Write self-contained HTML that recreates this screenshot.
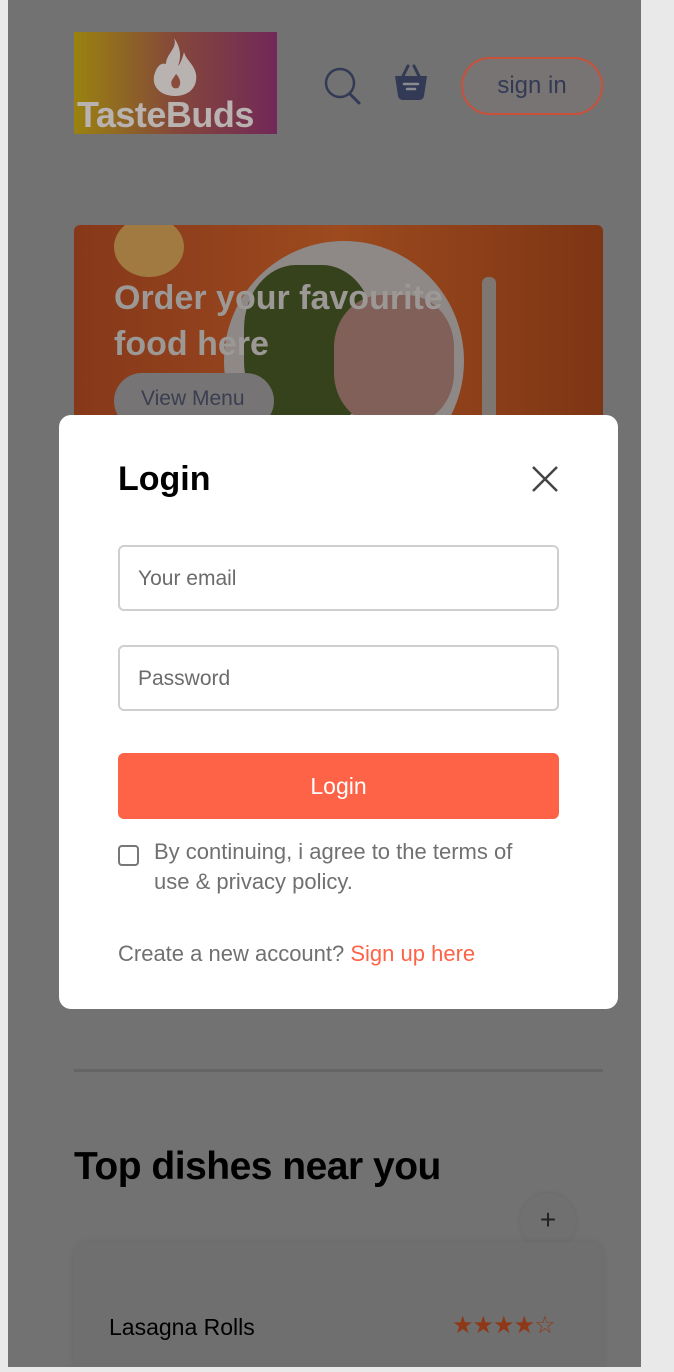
<!DOCTYPE html>
<html><head><meta charset="utf-8"><style>
*{box-sizing:border-box;margin:0;padding:0}
html,body{width:674px;height:1372px;overflow:hidden}
body{background:#e9e9e9;font-family:"Liberation Sans",sans-serif;position:relative}
.page{position:absolute;left:8px;top:0;width:633px;height:1367px;background:#727272;overflow:hidden}
.abs{position:absolute}
.logo{left:66px;top:32px;width:203px;height:102px;background:linear-gradient(90deg,#9a8210,#84483a 50%,#722858);}
.logo span{position:absolute;left:3px;top:62px;font-size:36px;font-weight:bold;color:#b8b2b0;letter-spacing:-0.5px}
.hero{left:66px;top:225px;width:529px;height:190px;border-radius:6px 6px 0 0;background:linear-gradient(90deg,#86381a,#9c4a1e 50%,#7e3514);overflow:hidden}
.modal{position:absolute;left:59px;top:415px;width:559px;height:594px;background:#fff;border-radius:12px}
.inp{position:absolute;left:59px;width:441px;height:66px;border:2px solid #cfcfcf;border-radius:6px;font-size:21px;color:#6b6b6b;padding:20px 0 0 18px}
</style></head><body>
<div class="page">
 <div class="abs logo">
  <svg class="abs" style="left:78px;top:6px" width="46" height="58" viewBox="0 0 46 58"><path d="M22 0C26 10 14 16 14 26C8 24 4 30 2 38C0 50 10 58 23 58C36 58 46 50 44 36C42 26 34 22 32 14C30 22 28 26 26 28C30 18 28 8 22 0Z" fill="#b8b2b0"/><path d="M24 36C28 40 30 46 26 50C20 52 18 46 20 42Z" fill="#8a4c3c"/></svg>
  <span>TasteBuds</span>
 </div>
 <svg class="abs" style="left:316px;top:66px" width="38" height="40" viewBox="0 0 38 40"><circle cx="16" cy="17" r="14" fill="none" stroke="#333a55" stroke-width="2.5"/><path d="M26 28L35 37" stroke="#333a55" stroke-width="3" stroke-linecap="round"/></svg>
 <svg class="abs" style="left:386px;top:64px" width="34" height="38" viewBox="0 0 34 38"><path d="M9 12L14 2M25 12L20 2" stroke="#333a55" stroke-width="3" stroke-linecap="round"/><path d="M1 12H33L30 32Q29 36 25 36H9Q5 36 4 32Z" fill="#333a55"/><path d="M10 20H24M13 25H21" stroke="#8a8a90" stroke-width="2.5" stroke-linecap="round"/></svg>
 <div class="abs" style="left:453px;top:57px;width:142px;height:58px;border:2px solid #c9503a;border-radius:29px;background:#787474;color:#333a55;font-size:24px;text-align:center;line-height:54px">sign in</div>
 <div class="abs hero">
  <div class="abs" style="left:40px;top:-8px;width:70px;height:60px;border-radius:50%;background:#a07a40"></div>
  <div class="abs" style="left:150px;top:16px;width:240px;height:240px;border-radius:50%;background:#8e8886"></div>
  <div class="abs" style="left:170px;top:40px;width:130px;height:160px;border-radius:40%;background:#36421c"></div>
  <div class="abs" style="left:260px;top:70px;width:120px;height:130px;border-radius:40%;background:#806058"></div>
  <div class="abs" style="left:408px;top:52px;width:14px;height:150px;background:#7e7670;border-radius:6px"></div>
  <div class="abs" style="left:40px;top:50px;font-size:34px;font-weight:bold;color:#9c9896;line-height:46px">Order your favourite<br>food here</div>
  <div class="abs" style="left:40px;top:148px;width:160px;height:56px;border-radius:28px;background:#767474;color:#3a3e50;font-size:21px;padding:14px 0 0 27px">View Menu</div>
 </div>
 <div class="abs" style="left:66px;top:1069px;width:529px;height:3px;background:#656565"></div>
 <div class="abs" style="left:66px;top:1145px;font-size:39px;font-weight:bold;color:#000;letter-spacing:-0.5px">Top dishes near you</div>
 <div class="abs" style="left:512px;top:1193px;width:56px;height:56px;border-radius:50%;background:#707070;box-shadow:0 0 3px #666;color:#222;font-size:28px;text-align:center;line-height:54px">+</div>
 <div class="abs" style="left:66px;top:1242px;width:529px;height:125px;border-radius:14px 14px 0 0;background:#6f6f6f;box-shadow:0 0 6px #686868"></div>
 <div class="abs" style="left:101px;top:1314px;font-size:23px;color:#000">Lasagna Rolls</div>
 <div class="abs" style="left:444px;top:1311px;font-size:24px;color:#8e3818;letter-spacing:-1px">★★★★☆</div>
</div>
<div class="modal">
 <div class="abs" style="left:59px;top:45px;font-size:34px;font-weight:bold;color:#000">Login</div>
 <svg class="abs" style="left:472px;top:50px" width="28" height="28" viewBox="0 0 28 28"><path d="M2 2L26 26M26 2L2 26" stroke="#444" stroke-width="2.5"/></svg>
 <div class="inp" style="top:130px">Your email</div>
 <div class="inp" style="top:230px">Password</div>
 <div class="abs" style="left:59px;top:338px;width:441px;height:66px;background:#ff6347;border-radius:6px;color:#fff;font-size:23px;text-align:center;line-height:66px">Login</div>
 <div class="abs" style="left:59px;top:430px;width:21px;height:21px;border:2px solid #777;border-radius:4px"></div>
 <div class="abs" style="left:95px;top:422px;width:395px;font-size:22px;line-height:30px;color:#707070">By continuing, i agree to the terms of use &amp; privacy policy.</div>
 <div class="abs" style="left:59px;top:526px;font-size:22px;color:#707070">Create a new account? <span style="color:#ff6347">Sign up here</span></div>
</div>
</body></html>
